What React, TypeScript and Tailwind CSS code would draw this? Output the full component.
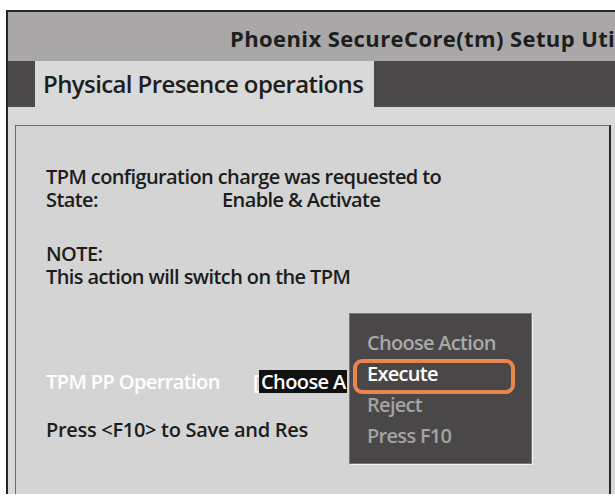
import React from "react";

const font = { fontFamily: '"Open Sans", "Noto Sans", sans-serif' };

export default function App() {
  return (
    <div className="relative w-[615px] h-[498px] bg-white overflow-hidden" style={font}>
      <div className="absolute left-[6px] top-[10px] w-[620px] h-[484px] border-l-2 border-t-2 border-[#262626] flex flex-col">
        {/* title bar */}
        <div className="h-[49px] bg-[#a9a7a8] flex items-center pl-[222px] shrink-0">
          <span className="text-[22px] font-bold text-[#1e1e1e] whitespace-nowrap tracking-[0.4px] pt-[4px]">
            Phoenix SecureCore(tm) Setup Utility
          </span>
        </div>
        {/* tab row */}
        <div className="h-[46px] flex shrink-0 bg-[#4c494a]">
          <div className="w-[27px]" />
          <div className="w-[339px] bg-[#d9d9d9] flex items-center pl-[8px]">
            <span className="text-[24px] font-semibold text-[#1e1e1e] whitespace-nowrap tracking-[-0.6px]">
              Physical Presence operations
            </span>
          </div>
        </div>
        {/* body */}
        <div className="flex-1 bg-[#d8d8d8] pl-[7px] pt-[18px] flex">
          <div className="w-[596px] h-full bg-[#d4d4d4] border-l border-t border-[#6d6d6d] border-r-2 border-r-[#2a2a2a] pl-[30px] pt-[39px] text-[#1c1c1c] text-[20px] font-semibold leading-[23px] tracking-[-0.6px]">
            <div>TPM configuration charge was requested to</div>
            <div className="flex">
              <span className="w-[176px]">State:</span>
              <span>Enable &amp; Activate</span>
            </div>
            <div className="mt-[31px]">NOTE:</div>
            <div>This action will switch on the TPM</div>
            <div className="mt-[81px] flex items-center h-[24px] whitespace-nowrap">
              <span className="w-[207px] text-white">TPM PP Operration</span>
              <span className="text-white">[</span>
              <span className="bg-[#111111] text-white pl-[2px] w-[88px] h-[23px] leading-[23px] overflow-hidden">Choose A</span>
            </div>
            <div className="mt-[25px] whitespace-nowrap tracking-[-0.3px]">Press &lt;F10&gt; to Save and Res</div>
          </div>
        </div>
      </div>
      {/* popup menu */}
      <div className="absolute left-[349px] top-[313px] w-[183px] h-[151px] bg-[#4a4748] border border-[#7a7778] shadow-[1px_1px_0_#f0f0f0] pt-[13px] text-[20px] font-semibold tracking-[-0.7px]">
        <div className="h-[31px] leading-[31px] pl-[17px] text-[#a9a9a9]">Choose Action</div>
        <div className="relative h-[31px] leading-[31px] pl-[17px] text-white">
          <div className="absolute left-[3px] top-[1px] w-[162px] h-[35px] border-[4px] border-[#e9864e] rounded-[9px]" />
          Execute
        </div>
        <div className="h-[31px] leading-[31px] pl-[17px] text-[#a3a3a3]">Reject</div>
        <div className="h-[31px] leading-[31px] pl-[17px] text-[#a3a3a3]">Press F10</div>
      </div>
    </div>
  );
}
